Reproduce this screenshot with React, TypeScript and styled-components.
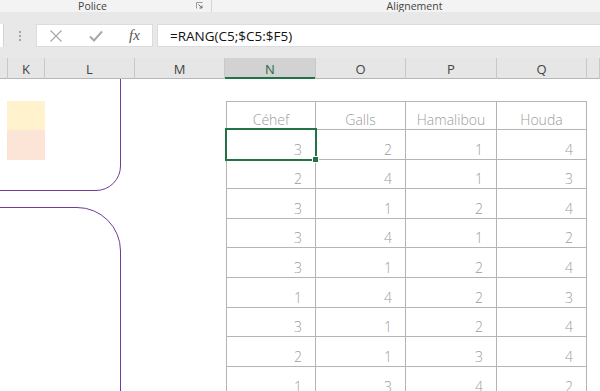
import React from "react";
import styled, { createGlobalStyle } from "styled-components";

const GlobalStyle = createGlobalStyle`
  html, body {
    margin: 0;
    padding: 0;
  }
  body {
    width: 600px;
    height: 391px;
    overflow: hidden;
    background: #fff;
    font-family: "Open Sans", "Liberation Sans", sans-serif;
  }
`;

const COLS = "8px 37px 90px 90px 91px 90px 91px 90px 1fr";
const ROWS = [22, 29, 30, 29, 30, 29, 30, 30, 29, 30, 30];

const people = ["Céhef", "Galls", "Hamalibou", "Houda"];
const ranks = [
  [3, 2, 1, 4],
  [2, 4, 1, 3],
  [3, 1, 2, 4],
  [3, 4, 1, 2],
  [3, 1, 2, 4],
  [1, 4, 2, 3],
  [3, 1, 2, 4],
  [2, 1, 3, 4],
  [1, 3, 4, 2],
];

const headers = ["", "K", "L", "M", "N", "O", "P", "Q", ""];

const App = () => {
  return (
    <>
      <GlobalStyle />
      <Window>
        <GroupBar>
          <Group $width={212} $padRight={26}>
            Police
            <Launcher width="7" height="7" viewBox="0 0 7 7">
              <path d="M0.5 6.5V0.5H6.5" fill="none" stroke="#9a9a9a" strokeWidth="1" />
              <path d="M2.5 2.5L6 6M6 3.5V6H3.5" fill="none" stroke="#6a6a6a" strokeWidth="1" />
            </Launcher>
          </Group>
          <Group $width={406} $padRight={0}>
            Alignement
          </Group>
        </GroupBar>
        <Band $height={12} />
        <FormulaBar>
          <NameBox />
          <Grip>
            <Dot />
            <Dot />
            <Dot />
          </Grip>
          <ActionBox>
            <ActionIcon width="14" height="14" viewBox="0 0 14 14">
              <path d="M1.5 1.5L12.5 12.5M12.5 1.5L1.5 12.5" stroke="#a9a9a9" strokeWidth="1.2" fill="none" />
            </ActionIcon>
            <ActionIcon width="14" height="14" viewBox="0 0 14 14">
              <path d="M1 7.5L5 11.5L13 2.5" stroke="#a9a9a9" strokeWidth="2" fill="none" />
            </ActionIcon>
            <Fx>fx</Fx>
          </ActionBox>
          <FormulaInput>=RANG(C5;$C5:$F5)</FormulaInput>
        </FormulaBar>
        <Band $height={11} />
        <ColumnHeaders>
          {headers.map((h, i) => (
            <ColHead key={i} $selected={h === "N"}>
              {h}
            </ColHead>
          ))}
        </ColumnHeaders>
        <Sheet>
          <SwatchCell $row={2} $color="#fff2cc" />
          <SwatchCell $row={3} $color="#fce4d6" />
          {people.map((p, c) => (
            <HeadCell key={p} $row={2} $col={5 + c}>
              {p}
            </HeadCell>
          ))}
          {ranks.map((r, ri) =>
            r.map((v, c) => (
              <NumCell
                key={`${ri}-${c}`}
                $row={3 + ri}
                $col={5 + c}
                $active={ri === 0 && c === 0}
              >
                {v}
              </NumCell>
            ))
          )}
          <UpperShape />
          <LowerShape />
        </Sheet>
      </Window>
    </>
  );
};

export default App;

const Window = styled.div`
  width: 600px;
  height: 391px;
  overflow: hidden;
  display: flex;
  flex-direction: column;
  background: #fff;
`;

const GroupBar = styled.div`
  height: 12px;
  flex: none;
  display: flex;
  background: #f3f3f3;
  overflow: hidden;
`;

const Group = styled.div<{ $width: number; $padRight: number }>`
  position: relative;
  flex: none;
  width: ${(p) => p.$width}px;
  padding-right: ${(p) => p.$padRight}px;
  box-sizing: border-box;
  border-right: 1px solid #d6d6d6;
  text-align: center;
  font-size: 10.5px;
  line-height: 12px;
  color: #444;
`;

const Launcher = styled.svg`
  position: absolute;
  right: 8px;
  top: 2px;
`;

const Band = styled.div<{ $height: number }>`
  height: ${(p) => p.$height}px;
  flex: none;
  background: #e8e8e8;
`;

const FormulaBar = styled.div`
  height: 23px;
  flex: none;
  display: flex;
  background: #e8e8e8;
`;

const NameBox = styled.div`
  width: 3px;
  background: #fff;
  border-right: 1px solid #d4d4d4;
`;

const Grip = styled.div`
  width: 32px;
  display: flex;
  flex-direction: column;
  align-items: center;
  justify-content: center;
  gap: 2px;
`;

const Dot = styled.span`
  width: 2px;
  height: 2px;
  background: #a6a6a6;
`;

const ActionBox = styled.div`
  width: 117px;
  box-sizing: border-box;
  background: #fff;
  border: 1px solid #dcdcdc;
  display: flex;
  align-items: center;
  padding-left: 12px;
  gap: 26px;
`;

const ActionIcon = styled.svg`
  flex: none;
`;

const Fx = styled.span`
  font-family: "Liberation Serif", "DejaVu Serif", serif;
  font-style: italic;
  font-size: 15px;
  color: #555;
  line-height: 1;
`;

const FormulaInput = styled.div`
  flex: 1;
  margin-left: 4px;
  background: #fff;
  border: 1px solid #dcdcdc;
  border-right: none;
  display: flex;
  align-items: center;
  padding-left: 12px;
  font-size: 13.5px;
  color: #111;
`;

const ColumnHeaders = styled.div`
  height: 20px;
  flex: none;
  display: grid;
  grid-template-columns: ${COLS};
  background: #e6e6e6;
  border-bottom: 1px solid #b6b6b6;
`;

const ColHead = styled.div<{ $selected?: boolean }>`
  display: flex;
  align-items: center;
  justify-content: center;
  font-size: 13px;
  color: ${(p) => (p.$selected ? "#1e6b40" : "#444")};
  background: ${(p) => (p.$selected ? "#d2d2d2" : "transparent")};
  border-right: 1px solid #c8c8c8;
  box-shadow: ${(p) => (p.$selected ? "inset 0 -2px 0 #217346" : "none")};
  margin-bottom: -1px;
`;

const Sheet = styled.div`
  position: relative;
  flex: 1;
  overflow: hidden;
  display: grid;
  grid-template-columns: ${COLS};
  grid-template-rows: ${ROWS.map((r) => `${r}px`).join(" ")};
`;

const SwatchCell = styled.div<{ $row: number; $color: string }>`
  grid-column: 2;
  grid-row: ${(p) => p.$row};
  background: ${(p) => p.$color};
  margin-left: -1px;
`;

const Cell = styled.div<{ $row: number; $col: number }>`
  grid-row: ${(p) => p.$row};
  grid-column: ${(p) => p.$col};
  position: relative;
  box-sizing: border-box;
  display: flex;
  align-items: flex-end;
  border-right: 1px solid #b4b4b4;
  border-bottom: 1px solid #b4b4b4;
  border-left: ${(p) => (p.$col === 5 ? "1px solid #b4b4b4" : "none")};
  margin-left: ${(p) => (p.$col === 5 ? "1px" : "0")};
  font-family: "Open Sans", "Liberation Sans", sans-serif;
  font-weight: 300;
  font-size: 14px;
  line-height: 18px;
  color: #9c9c9c;
`;

const HeadCell = styled(Cell)`
  border-top: 1px solid #b4b4b4;
  justify-content: center;
  padding-bottom: 0;
`;

const NumCell = styled(Cell)<{ $active?: boolean }>`
  justify-content: flex-end;
  padding-right: 13px;
  z-index: ${(p) => (p.$active ? 2 : 0)};
  &::after {
    content: "";
    display: ${(p) => (p.$active ? "block" : "none")};
    position: absolute;
    left: -2px;
    top: -2px;
    right: -2px;
    bottom: -2px;
    border: 2px solid #217346;
  }
  &::before {
    content: "";
    display: ${(p) => (p.$active ? "block" : "none")};
    position: absolute;
    right: -4px;
    bottom: -4px;
    width: 5px;
    height: 5px;
    background: #217346;
    border: 1px solid #fff;
    z-index: 3;
  }
`;

const Shape = styled.div`
  position: absolute;
  left: -30px;
  width: 151px;
  box-sizing: border-box;
  border: 1.6px solid #6f3b9c;
  pointer-events: none;
`;

const UpperShape = styled(Shape)`
  top: -40px;
  height: 152px;
  border-bottom-right-radius: 25px;
`;

const LowerShape = styled(Shape)`
  top: 128px;
  height: 300px;
  border-top-right-radius: 44px;
`;
